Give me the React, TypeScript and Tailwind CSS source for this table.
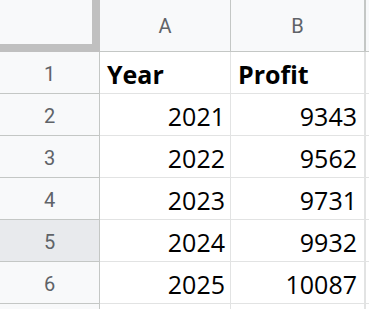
const rows = [
  { n: "1", a: "Year", b: "Profit", head: true },
  { n: "2", a: "2021", b: "9343" },
  { n: "3", a: "2022", b: "9562" },
  { n: "4", a: "2023", b: "9731" },
  { n: "5", a: "2024", b: "9932", selected: true },
  { n: "6", a: "2025", b: "10087" },
  { n: "", a: "", b: "" },
];

export default function App() {
  return (
    <div className="w-[369px] h-[309px] overflow-hidden bg-white font-['Open_Sans',sans-serif] text-black">
      {/* Column headers */}
      <div className="flex h-[52px]">
        <div className="w-[100px] shrink-0 bg-[#c0c0c0]">
          <div className="w-[92px] h-[44px] bg-[#f8f9fa]" />
        </div>
        <div className="w-[131px] shrink-0 flex items-center justify-center bg-[#f8f9fa] border-r border-b border-[#c4c7c5] font-['Roboto',sans-serif] text-[20px] text-[#5f6368]">
          A
        </div>
        <div className="w-[135px] shrink-0 flex items-center justify-center bg-[#f8f9fa] border-r-2 border-b border-[#c4c7c5] font-['Roboto',sans-serif] text-[20px] text-[#5f6368]">
          B
        </div>
        <div className="flex-1 bg-[#f8f9fa] border-b border-[#c4c7c5]" />
      </div>

      {/* Rows */}
      {rows.map((r, i) => (
        <div key={i} className="flex h-[42px]">
          <div
            className={`w-[100px] shrink-0 flex items-center justify-center pt-[3px] border-r border-b border-[#c4c7c5] font-['Roboto',sans-serif] text-[20px] text-[#5f6368] ${
              r.selected ? "bg-[#e8eaed]" : "bg-[#f8f9fa]"
            }`}
          >
            {r.n}
          </div>
          <div
            className={`w-[131px] shrink-0 flex items-end border-r border-b border-[#e2e3e3] text-[25px] leading-none pb-[6px] ${
              r.head ? "font-bold justify-start pl-[7px]" : "justify-end pr-[5px]"
            }`}
          >
            {r.a}
          </div>
          <div
            className={`w-[135px] shrink-0 flex items-end border-r-2 border-b border-[#e2e3e3] text-[25px] leading-none pb-[6px] ${
              r.head ? "font-bold justify-start pl-[7px]" : "justify-end pr-[7px]"
            }`}
          >
            {r.b}
          </div>
          <div className="flex-1 border-b border-[#e2e3e3]" />
        </div>
      ))}
    </div>
  );
}
